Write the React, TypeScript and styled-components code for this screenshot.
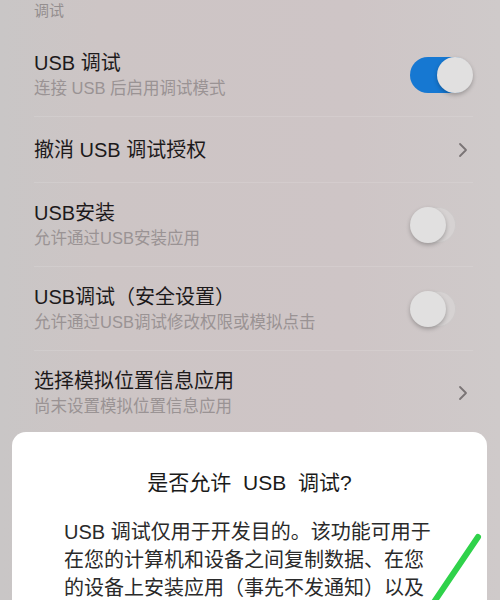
import React from 'react';
import styled, { createGlobalStyle } from 'styled-components';

const GlobalStyle = createGlobalStyle`
  html, body {
    margin: 0;
    padding: 0;
  }
  body {
    font-family: "Liberation Sans", "Noto Sans CJK SC", sans-serif;
  }
`;

const Screen = styled.div`
  position: relative;
  width: 500px;
  height: 600px;
  overflow: hidden;
  background: linear-gradient(90deg, #c9c6c6 0%, #cdc5c5 20%, #cec5c6 70%, #cfcaca 100%);
`;

const SectionHeader = styled.div`
  padding: 1px 34px 12px;
  font-size: 15px;
  line-height: 20px;
  color: #948e8f;
`;

const Row = styled.div<{ tall?: boolean }>`
  display: flex;
  align-items: center;
  height: ${({ tall }) => (tall ? '84px' : '66px')};
  margin: 0 27px 0 34px;
  border-bottom: 1px solid rgba(255, 255, 255, 0.12);
  box-sizing: border-box;
`;

const TextBlock = styled.div`
  flex: 1;
  display: flex;
  flex-direction: column;
`;

const Title = styled.div`
  font-size: 20px;
  line-height: 26px;
  color: #1d1a1b;
`;

const Subtitle = styled.div`
  font-size: 16.5px;
  line-height: 24px;
  color: #9a9394;
`;

const Track = styled.div<{ on?: boolean }>`
  position: relative;
  width: ${({ on }) => (on ? '62px' : '46px')};
  height: 36px;
  border-radius: 18px;
  margin-right: ${({ on }) => (on ? '1px' : '17px')};
  background: ${({ on }) => (on ? '#1678d2' : '#d6d2d2')};
  box-shadow: ${({ on }) => (on ? 'none' : 'inset 0 0 0 1px rgba(0,0,0,0.04)')};
`;

const Knob = styled.div<{ on?: boolean }>`
  position: absolute;
  top: 0;
  ${({ on }) => (on ? 'right: -1px;' : 'left: 0;')}
  width: 36px;
  height: 36px;
  border-radius: 50%;
  background: #e1e0e0;
  box-shadow: 0 2px 4px rgba(0, 0, 0, 0.25);
`;

const Chevron = styled.svg`
  width: 12px;
  height: 18px;
  margin-right: 4px;
`;

const Dialog = styled.div`
  position: absolute;
  left: 12px;
  right: 13px;
  top: 432px;
  height: 260px;
  background: #ffffff;
  border-radius: 14px;
  padding: 37px 0 0 52px;
  box-sizing: border-box;
`;

const DialogTitle = styled.div`
  margin-left: -52px;
  text-align: center;
  font-size: 21px;
  line-height: 28px;
  color: #1a1a1a;
  word-spacing: 6px;
`;

const DialogBody = styled.div`
  margin-top: 21px;
  font-size: 20px;
  line-height: 28px;
  color: #2a2a2a;
`;

const BodyLine = styled.div`
  white-space: nowrap;
`;

const Stroke = styled.svg`
  position: absolute;
  left: 420px;
  top: 530px;
  width: 70px;
  height: 70px;
`;

const Switch = ({ on }: { on?: boolean }) => (
  <Track on={on}>
    <Knob on={on} />
  </Track>
);

const Arrow = () => (
  <Chevron viewBox="0 0 12 18">
    <path d="M3 3 L9 9 L3 15" fill="none" stroke="#7a7475" strokeWidth="1.8" strokeLinecap="round" strokeLinejoin="round" />
  </Chevron>
);

const rows = [
  { title: 'USB 调试', sub: '连接 USB 后启用调试模式', control: 'on' },
  { title: '撤消 USB 调试授权', control: 'arrow' },
  { title: 'USB安装', sub: '允许通过USB安装应用', control: 'off' },
  { title: 'USB调试（安全设置）', sub: '允许通过USB调试修改权限或模拟点击', control: 'off' },
  { title: '选择模拟位置信息应用', sub: '尚末设置模拟位置信息应用', control: 'arrow' },
];

const bodyLines = [
  'USB 调试仅用于开发目的。该功能可用于',
  '在您的计算机和设备之间复制数据、在您',
  '的设备上安装应用（事先不发通知）以及',
];

export default function App() {
  return (
    <Screen>
      <GlobalStyle />
      <SectionHeader>调试</SectionHeader>
      {rows.map((row) => (
        <Row key={row.title} tall={!!row.sub}>
          <TextBlock>
            <Title>{row.title}</Title>
            {row.sub && <Subtitle>{row.sub}</Subtitle>}
          </TextBlock>
          {row.control === 'arrow' ? <Arrow /> : <Switch on={row.control === 'on'} />}
        </Row>
      ))}
      <Dialog>
        <DialogTitle>是否允许 USB 调试?</DialogTitle>
        <DialogBody>
          {bodyLines.map((line) => (
            <BodyLine key={line}>{line}</BodyLine>
          ))}
        </DialogBody>
      </Dialog>
      <Stroke viewBox="0 0 70 70">
        <path d="M58 7 L12 75" stroke="#2fd24a" strokeWidth="6" strokeLinecap="round" fill="none" />
      </Stroke>
    </Screen>
  );
}
